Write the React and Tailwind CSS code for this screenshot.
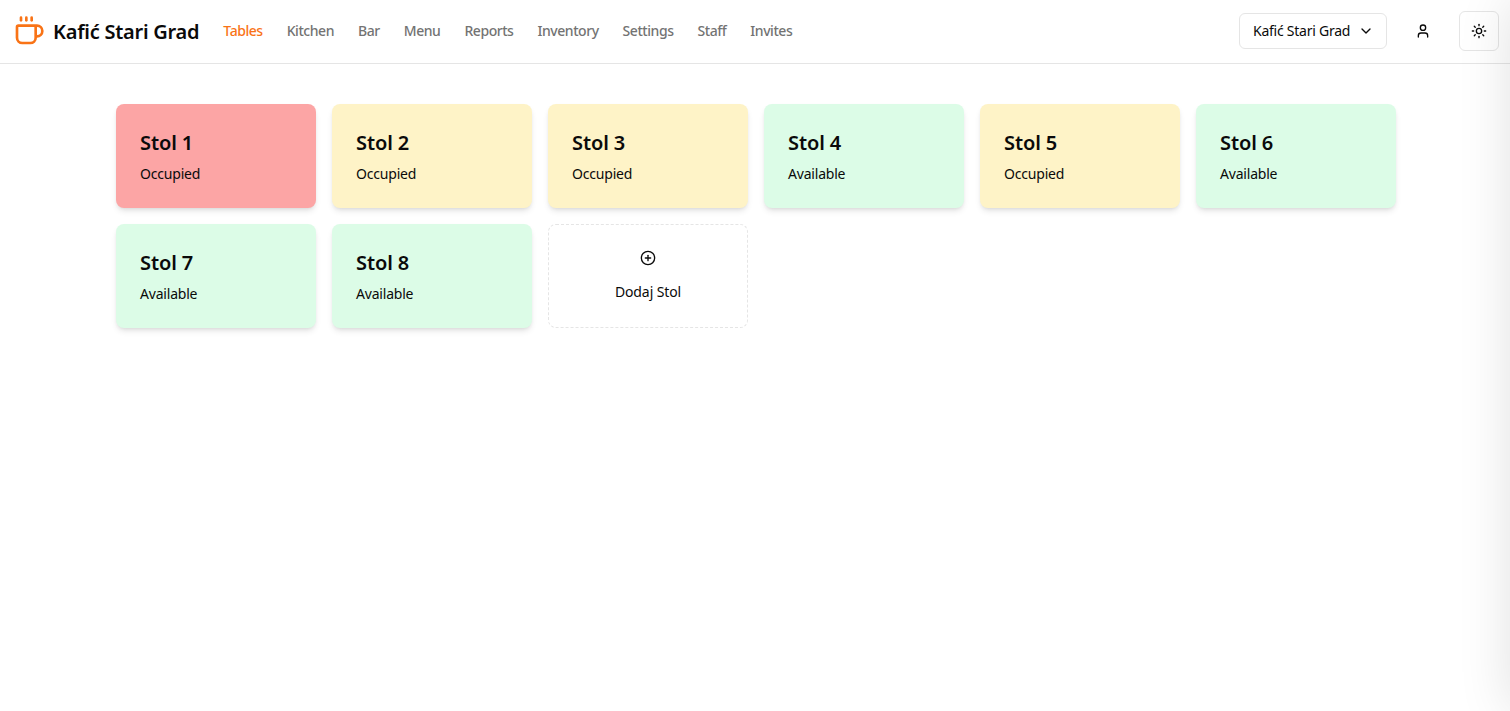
import { ChevronDown, CirclePlus, Coffee, Sun, User } from "lucide-react";

const links = ["Tables", "Kitchen", "Bar", "Menu", "Reports", "Inventory", "Settings", "Staff", "Invites"];

const tables = [
  { id: 1, status: "Occupied", color: "bg-[#fca5a5]" },
  { id: 2, status: "Occupied", color: "bg-[#fef3c7]" },
  { id: 3, status: "Occupied", color: "bg-[#fef3c7]" },
  { id: 4, status: "Available", color: "bg-[#dcfce7]" },
  { id: 5, status: "Occupied", color: "bg-[#fef3c7]" },
  { id: 6, status: "Available", color: "bg-[#dcfce7]" },
  { id: 7, status: "Available", color: "bg-[#dcfce7]" },
  { id: 8, status: "Available", color: "bg-[#dcfce7]" },
];

function Header() {
  return (
    <header className="flex h-16 items-center justify-between border-b border-[#e5e5e5] bg-white pb-px pl-[13px] pr-[11px]">
      <div className="flex items-center">
        <Coffee className="h-8 w-8 text-[#f97316]" />
        <span className="ml-2 mt-px text-xl font-semibold tracking-[-0.25px] text-[#0a0a0a]">Kafić Stari Grad</span>
        <nav className="ml-6 flex items-center gap-6">
          {links.map((link, i) => (
            <a key={link} className={`text-sm font-medium tracking-[-0.45px] ${i === 0 ? "text-[#f97316]" : "text-[#737373]"}`}>
              {link}
            </a>
          ))}
        </nav>
      </div>
      <div className="flex items-center">
        <button className="flex h-9 w-[148px] items-center justify-between rounded-md border border-[#e5e5e5] bg-white pl-[13px] pr-[12px] text-sm tracking-[-0.25px] text-[#0a0a0a]">
          Kafić Stari Grad
          <ChevronDown className="h-4 w-4" />
        </button>
        <button className="ml-[16px] flex h-10 w-10 items-center justify-center text-[#0a0a0a]">
          <User className="h-4 w-4" />
        </button>
        <button className="ml-[16px] flex h-10 w-10 items-center justify-center rounded-md border border-[#e5e5e5] bg-white text-[#0a0a0a]">
          <Sun className="h-4 w-4" />
        </button>
      </div>
    </header>
  );
}

function TableCard({ table }) {
  return (
    <div className={`flex h-[104px] flex-col rounded-lg px-6 pt-[25px] shadow-md ${table.color}`}>
      <h3 className="text-xl font-semibold leading-7 tracking-[-0.1px] text-[#0a0a0a]">Stol {table.id}</h3>
      <p className="mt-[7px] text-sm tracking-[-0.2px] text-[#0a0a0a]">{table.status}</p>
    </div>
  );
}

export default function App() {
  return (
    <div className="relative h-[711px] overflow-hidden bg-white font-['Noto_Sans',sans-serif]">
      <Header />
      <main className="pl-[116px] pt-10">
        <div className="grid w-[1280px] grid-cols-6 gap-4">
          {tables.map((table) => (
            <TableCard key={table.id} table={table} />
          ))}
          <button className="flex h-[104px] flex-col items-center justify-center rounded-lg border border-dashed border-[#e5e5e5] bg-white text-[#0a0a0a]">
            <CirclePlus className="h-4 w-4" />
            <span className="mt-4 text-sm tracking-[-0.1px]">Dodaj Stol</span>
          </button>
        </div>
      </main>
      {/* closed drawer, only its shadow shows */}
      <aside className="absolute inset-y-0 left-full w-64 shadow-[0_0_50px_rgba(0,0,0,0.12)]" />
    </div>
  );
}
